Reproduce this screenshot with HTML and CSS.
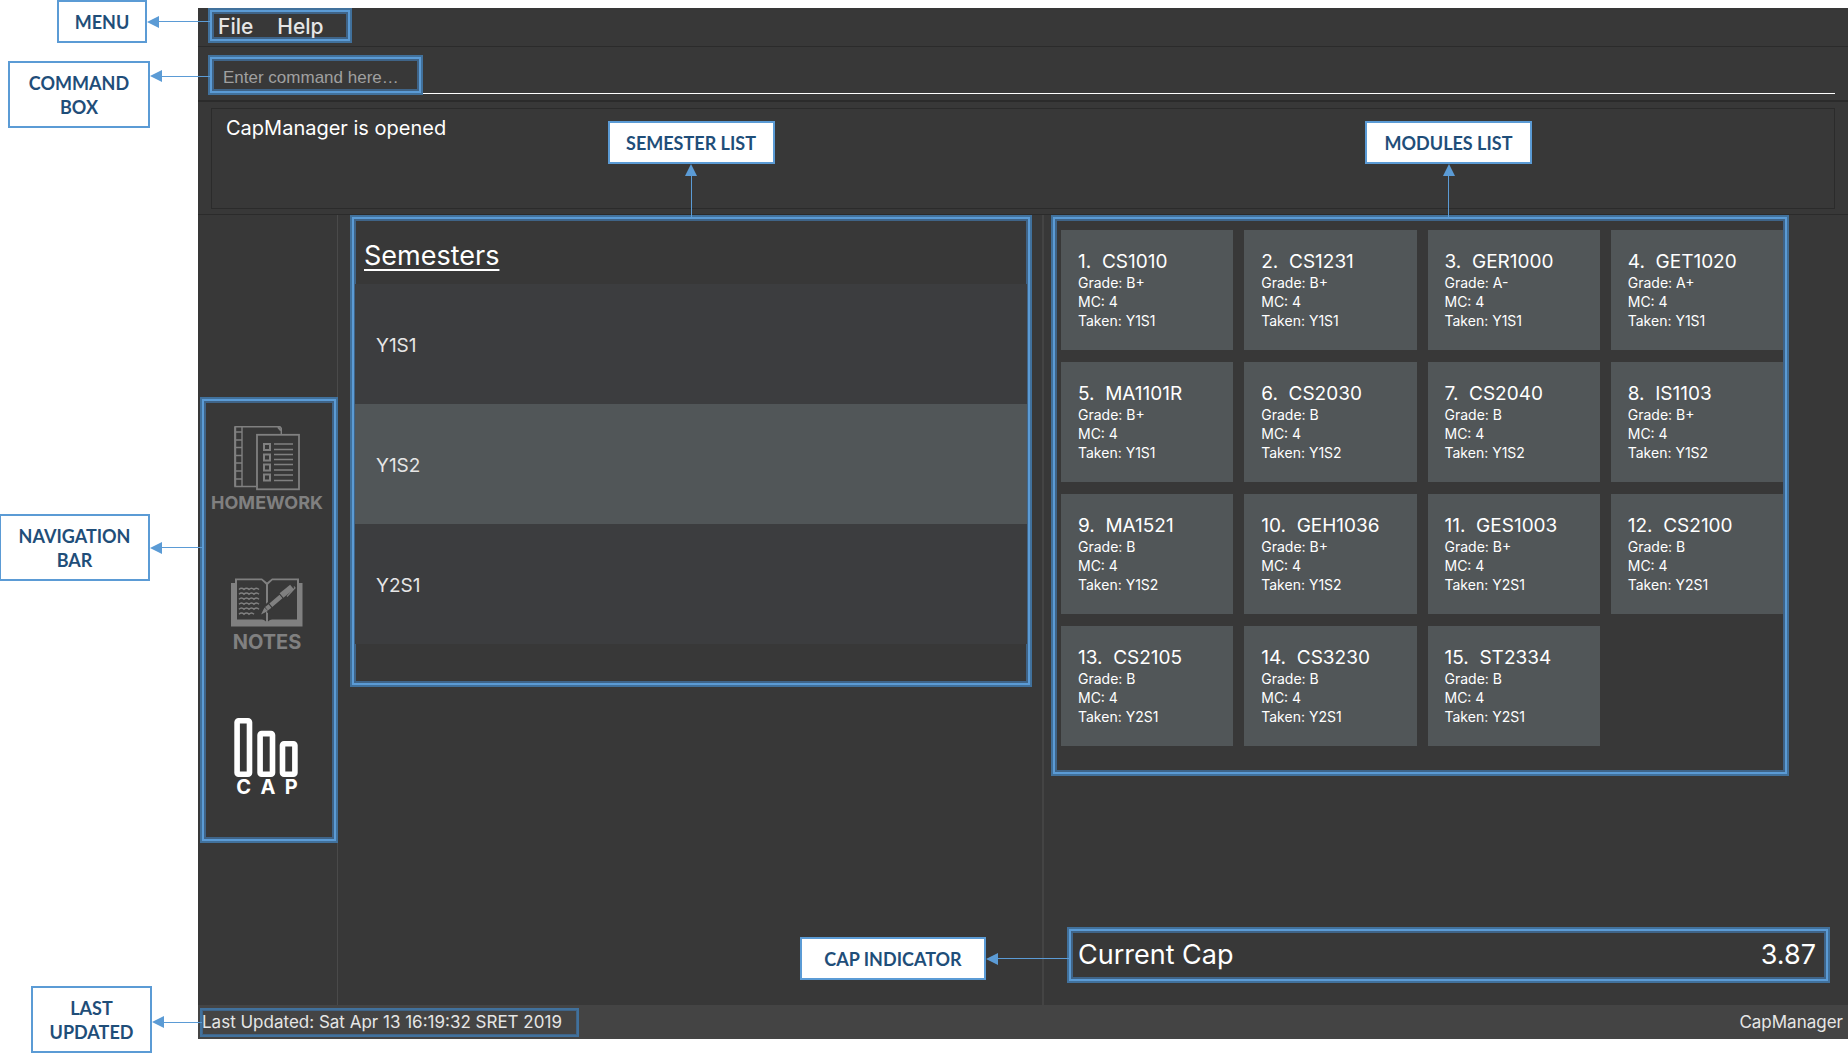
FILE: index.html
```html
<!DOCTYPE html>
<html lang="en">
<head>
<meta charset="utf-8">
<title>CapManager</title>
<link rel="stylesheet" href="styles.css">
</head>
<body>
<div class="app">
  <header class="menu-bar">
    <div class="menu highlight">
      <button type="button">File</button>
      <button type="button">Help</button>
      <div class="callout callout-left callout-menu"><span class="note note-menu">MENU</span><span class="arrow arrow-left"></span></div>
    </div>
  </header>

  <form class="command">
    <div class="command-field">
      <input type="text" aria-label="Command" placeholder="Enter command here…">
      <div class="command-mark highlight">
        <div class="callout callout-left callout-command"><span class="note note-command">COMMAND BOX</span><span class="arrow arrow-left"></span></div>
      </div>
    </div>
  </form>

  <section class="result">
    <div class="result-box">CapManager is opened</div>
  </section>

  <main class="content">
    <div class="sidebar">
      <nav class="nav highlight">
        <a href="#homework">
          <svg width="67" height="67" viewBox="0 0 67 67" fill="none" stroke="currentColor" stroke-width="1.4" aria-hidden="true">
            <path d="M22 60.5H1V.8H46l1.3 1.500V8M8 1V60.500"/>
            <path d="M1.200 1V60.500" stroke-width="2"/>
            <path d="M1 6H8M1 14H8M1 21.500H8M1 29.500H8M1 37H8M1 45H8M1 53H8"/>
            <path d="M44 1l3 3.500" stroke-width="2"/>
            <rect x="23" y="8.800" width="42" height="54.500" stroke-width="1.800"/>
            <path stroke-width="2" d="M30 18h6v6h-6zM30 28.500h6v6h-6zM30 38.500h6v6h-6zM30 48.500h6v6h-6z"/>
            <path d="M40 18H59M40 23.500H59M40 28.500H59M40 33.500H59M40 38.500H59M40 44H59M40 49H59M40 54.500H59"/>
          </svg>
          <span class="label-small">HOMEWORK</span>
        </a>
        <a href="#notes">
          <svg width="72" height="55" viewBox="0 0 72 55" aria-hidden="true">
            <path fill="currentColor" d="M0 5H4V.5H31L36 4.500 41 .5H68V5H71.500V48.500H0z"/>
            <path fill="#383838" d="M6 2.200H30.500L35 6.500V43.500Q33 41.500 31 41.500H6zM66 2.200H41.500L37 6.500V43.500Q39 41.500 41 41.500H66z"/>
            <path fill="none" stroke="currentColor" stroke-width="1.400" d="M8 11.500q2.500-2.500 5 0 2.500-2.500 5 0 2.500-2.500 5 0 2.500-2.500 5 0M8 16.300q2.500-2.500 5 0 2.500-2.500 5 0 2.500-2.500 5 0 2.500-2.500 5 0M8 21.300q2.500-2.500 5 0 2.500-2.500 5 0 2.500-2.500 5 0 2.500-2.500 5 0M8 26.300q2.500-2.500 5 0 2.500-2.500 5 0 2.500-2.500 5 0 2.500-2.500 5 0M8 31.300q2.500-2.500 5 0 2.500-2.500 5 0 2.500-2.500 5 0 2.500-2.500 5 0M8 36.300q2.500-2.500 5 0 2.500-2.500 5 0 2.500-2.500 5 0"/>
            <path stroke="#383838" stroke-width="8" d="M34 32L50 18"/>
            <path fill="currentColor" d="M30 36.500L33.500 29.500 37 33z"/>
            <path fill="none" stroke="currentColor" stroke-width="4.500" d="M35.500 30.800L39 28M39.800 27.200L50 18.500"/>
            <path fill="none" stroke="currentColor" stroke-width="6" d="M50.500 17.500L61 9"/>
            <path fill="none" stroke="currentColor" stroke-width="1.200" d="M56 18.500l8-8.500-1-1.500"/>
          </svg>
          <span>NOTES</span>
        </a>
        <a href="#cap" class="active" aria-current="page">
          <svg width="66" height="60" viewBox="0 0 66 60" fill="none" stroke="currentColor" stroke-width="5.600" aria-hidden="true">
            <rect x="3.100" y="2.800" width="12.400" height="53.400" rx="1.500"/>
            <rect x="26.100" y="15.600" width="12.400" height="40.600" rx="1.500"/>
            <rect x="48.500" y="25.800" width="12.400" height="30.400" rx="1.500"/>
          </svg>
          <span class="spaced">C  A  P</span>
        </a>
        <div class="callout callout-left callout-nav"><span class="note note-nav">NAVIGATION BAR</span><span class="arrow arrow-left"></span></div>
      </nav>
    </div>

    <section class="semester-pane">
      <div class="semesters highlight">
        <h1>Semesters</h1>
        <ul>
          <li>Y1S1</li>
          <li class="selected">Y1S2</li>
          <li>Y2S1</li>
        </ul>
        <div class="callout callout-up"><span class="note note-list">SEMESTER LIST</span><span class="arrow arrow-up"></span></div>
      </div>
    </section>

    <section class="module-pane">
      <div class="modules highlight">
        <ol>
          <li><h2>1.&nbsp; CS1010</h2><p>Grade: B+</p><p>MC: 4</p><p>Taken: Y1S1</p></li>
          <li><h2>2.&nbsp; CS1231</h2><p>Grade: B+</p><p>MC: 4</p><p>Taken: Y1S1</p></li>
          <li><h2>3.&nbsp; GER1000</h2><p>Grade: A-</p><p>MC: 4</p><p>Taken: Y1S1</p></li>
          <li><h2>4.&nbsp; GET1020</h2><p>Grade: A+</p><p>MC: 4</p><p>Taken: Y1S1</p></li>
          <li><h2>5.&nbsp; MA1101R</h2><p>Grade: B+</p><p>MC: 4</p><p>Taken: Y1S1</p></li>
          <li><h2>6.&nbsp; CS2030</h2><p>Grade: B</p><p>MC: 4</p><p>Taken: Y1S2</p></li>
          <li><h2>7.&nbsp; CS2040</h2><p>Grade: B</p><p>MC: 4</p><p>Taken: Y1S2</p></li>
          <li><h2>8.&nbsp; IS1103</h2><p>Grade: B+</p><p>MC: 4</p><p>Taken: Y1S2</p></li>
          <li><h2>9.&nbsp; MA1521</h2><p>Grade: B</p><p>MC: 4</p><p>Taken: Y1S2</p></li>
          <li><h2>10.&nbsp; GEH1036</h2><p>Grade: B+</p><p>MC: 4</p><p>Taken: Y1S2</p></li>
          <li><h2>11.&nbsp; GES1003</h2><p>Grade: B+</p><p>MC: 4</p><p>Taken: Y2S1</p></li>
          <li><h2>12.&nbsp; CS2100</h2><p>Grade: B</p><p>MC: 4</p><p>Taken: Y2S1</p></li>
          <li><h2>13.&nbsp; CS2105</h2><p>Grade: B</p><p>MC: 4</p><p>Taken: Y2S1</p></li>
          <li><h2>14.&nbsp; CS3230</h2><p>Grade: B</p><p>MC: 4</p><p>Taken: Y2S1</p></li>
          <li><h2>15.&nbsp; ST2334</h2><p>Grade: B</p><p>MC: 4</p><p>Taken: Y2S1</p></li>
        </ol>
        <div class="callout callout-up callout-modules"><span class="note note-list">MODULES LIST</span><span class="arrow arrow-up"></span></div>
      </div>
      <div class="cap highlight">
        <span>Current Cap</span>
        <span>3.87</span>
        <div class="callout callout-left callout-cap"><span class="note note-cap">CAP INDICATOR</span><span class="arrow arrow-left"></span></div>
      </div>
    </section>
  </main>

  <footer class="status">
    <div class="updated highlight">
      Last Updated: Sat Apr 13 16:19:32 SRET 2019
      <div class="callout callout-left callout-updated"><span class="note note-updated">LAST UPDATED</span><span class="arrow arrow-left"></span></div>
    </div>
    <span>CapManager</span>
  </footer>
</div>
</body>
</html>
```
FILE: styles.css
```css
* { box-sizing: border-box; }

body {
  display: flex;
  min-height: 100vh;
  margin: 0;
  padding: 8px 0 19px 198px;
  background: #fff;
  color: #fff;
  font-family: Inter, "Liberation Sans", sans-serif;
}

h1, h2, p, ul, ol { margin: 0; padding: 0; font-weight: 400; }
ul, ol { list-style: none; }

.app {
  flex: 1;
  min-width: 0;
  display: flex;
  flex-direction: column;
  background: #383838;
}

/* Framed regions and the notes that name them */
.highlight {
  position: relative;
  border: 2px solid #41719c;
  box-shadow: inset 0 0 0 2px #5b9bd5, inset 0 0 0 4px #3f6488;
}

.callout {
  position: absolute;
  z-index: 1;
  display: flex;
  align-items: center;
}
.callout-left { right: 100%; }
.callout-up {
  left: 0;
  right: 0;
  bottom: 100%;
  flex-direction: column;
}

.note {
  display: block;
  flex: none;
  padding: 8px 10px 7px;
  border: 2px solid #5b9bd5;
  background: #fff;
  color: #1f4e79;
  font: 700 18px/24px Lato, "Open Sans", sans-serif;
  text-align: center;
  white-space: normal;
}
.note-menu { width: 90px; }
.note-command { width: 142px; }
.note-nav { width: 151px; }
.note-updated { width: 121px; }
.note-list { width: 167px; }
.note-cap { width: 186px; }

.arrow { display: flex; flex: none; align-items: center; }
.arrow::before { content: ""; border: 6px solid transparent; }
.arrow::after { content: ""; flex: 1; background: #5b9bd5; }
.arrow-left::before { border-left: 0; border-right: 12px solid #5b9bd5; }
.arrow-left::after { height: 1px; }
.arrow-up { flex-direction: column; height: 53px; }
.arrow-up::before { border-top: 0; border-bottom: 12px solid #5b9bd5; }
.arrow-up::after { width: 1px; }

.callout-menu { top: -10px; }
.callout-menu .arrow { width: 63px; }
.callout-command { top: 4px; align-items: flex-start; }
.callout-command .arrow { width: 60px; margin-top: 9px; }
.callout-nav { top: 115px; }
.callout-nav .arrow { width: 52px; }
.callout-cap { top: 8px; }
.callout-cap .arrow { width: 83px; }
.callout-updated { top: -24px; }
.callout-updated .arrow { width: 50px; margin-top: 6px; }
.callout-modules { left: 312px; right: auto; }

/* Menu */
.menu-bar {
  display: flex;
  height: 39px;
  padding-left: 10px;
  border-bottom: 1px solid #2b2b2b;
}
.menu {
  display: flex;
  align-items: center;
  gap: 24px;
  width: 144px;
  height: 35px;
  padding: 2px 0 0 8px;
}
.menu button {
  padding: 0;
  border: 0;
  background: none;
  color: #e6e6e6;
  font: 500 21px/24px Inter, sans-serif;
}

/* Command line */
.command {
  height: 55px;
  padding: 8px 13px 0 10px;
  border-bottom: 2px solid #2b2b2b;
}
.command-field { position: relative; }
.command input {
  display: block;
  width: 100%;
  height: 39px;
  padding: 7px 15px 0;
  border: 0;
  border-bottom: 1px solid #fff;
  background: none;
  color: #fff;
  font: 17px/24px "Liberation Sans", Arial, sans-serif;
}
.command input::placeholder { color: #a0a0a0; opacity: 1; }
.command-mark {
  position: absolute;
  top: 0;
  left: 0;
  width: 215px;
  height: 40px;
  pointer-events: none;
}

/* Result display */
.result {
  padding: 6px 13px 5px;
  border-bottom: 1px solid #2b2b2b;
}
.result-box {
  height: 101px;
  padding: 7px 14px;
  border: 1px solid #2b2b2b;
  font-size: 20px;
  line-height: 24px;
}

.content {
  flex: 1;
  display: grid;
  grid-template-columns: 140px 706fr 804fr;
}

/* Navigation */
.sidebar {
  padding: 182px 0 8px 2px;
  border-right: 1px solid #4a4a4a;
}
.nav {
  display: flex;
  flex-direction: column;
  align-items: center;
  gap: 66px;
  width: 138px;
  height: 446px;
  padding: 27px 4px 0 0;
}
.nav a {
  display: flex;
  flex-direction: column;
  align-items: center;
  color: #808080;
  font-size: 20px;
  font-weight: 700;
  line-height: 19px;
  text-decoration: none;
}
.nav a.active { color: #fff; }
.nav .label-small { font-size: 18px; }
.nav .spaced { white-space: pre; }

/* Semesters */
.semester-pane {
  padding: 0 10px 0 12px;
  border-right: 2px solid #444;
}
.semesters { min-height: 472px; padding: 3px; }
.semesters h1 {
  padding: 21px 9px 13px;
  font-size: 27px;
  line-height: 30px;
  text-decoration: underline;
  text-decoration-thickness: 2px;
  text-underline-offset: 4px;
}
.semesters li {
  display: flex;
  align-items: center;
  height: 120px;
  padding: 2px 21px 0;
  background: #3c3d3f;
  color: #e6e6e6;
  font-size: 19px;
}
.semesters .selected { background: #515658; }

/* Modules */
.module-pane {
  display: flex;
  flex-direction: column;
  justify-content: space-between;
  padding: 0 18px 22px 7px;
}
.modules {
  margin-right: 41px;
  min-height: 561px;
  padding: 13px 4px 26px 8px;
}
.modules ol {
  display: grid;
  grid-template-columns: repeat(4, 1fr);
  gap: 12px 11px;
}
.modules li {
  height: 120px;
  padding: 20px 17px;
  background: #515658;
  font-size: 14px;
  line-height: 19px;
}
.modules h2 { font-size: 19px; line-height: 23px; }
.cap {
  display: flex;
  align-items: center;
  justify-content: space-between;
  height: 56px;
  margin-left: 16px;
  padding: 0 12px 2px 9px;
  font-size: 27px;
}

/* Status bar */
.status {
  display: flex;
  align-items: center;
  justify-content: space-between;
  height: 34px;
  padding: 0 5px 0 2px;
  background: #444;
  color: #e6e6e6;
  font-size: 17px;
}
.updated {
  width: 379px;
  height: 29px;
  line-height: 25px;
  white-space: nowrap;
  box-shadow: inset 0 0 0 1px #3f6488;
}
```
